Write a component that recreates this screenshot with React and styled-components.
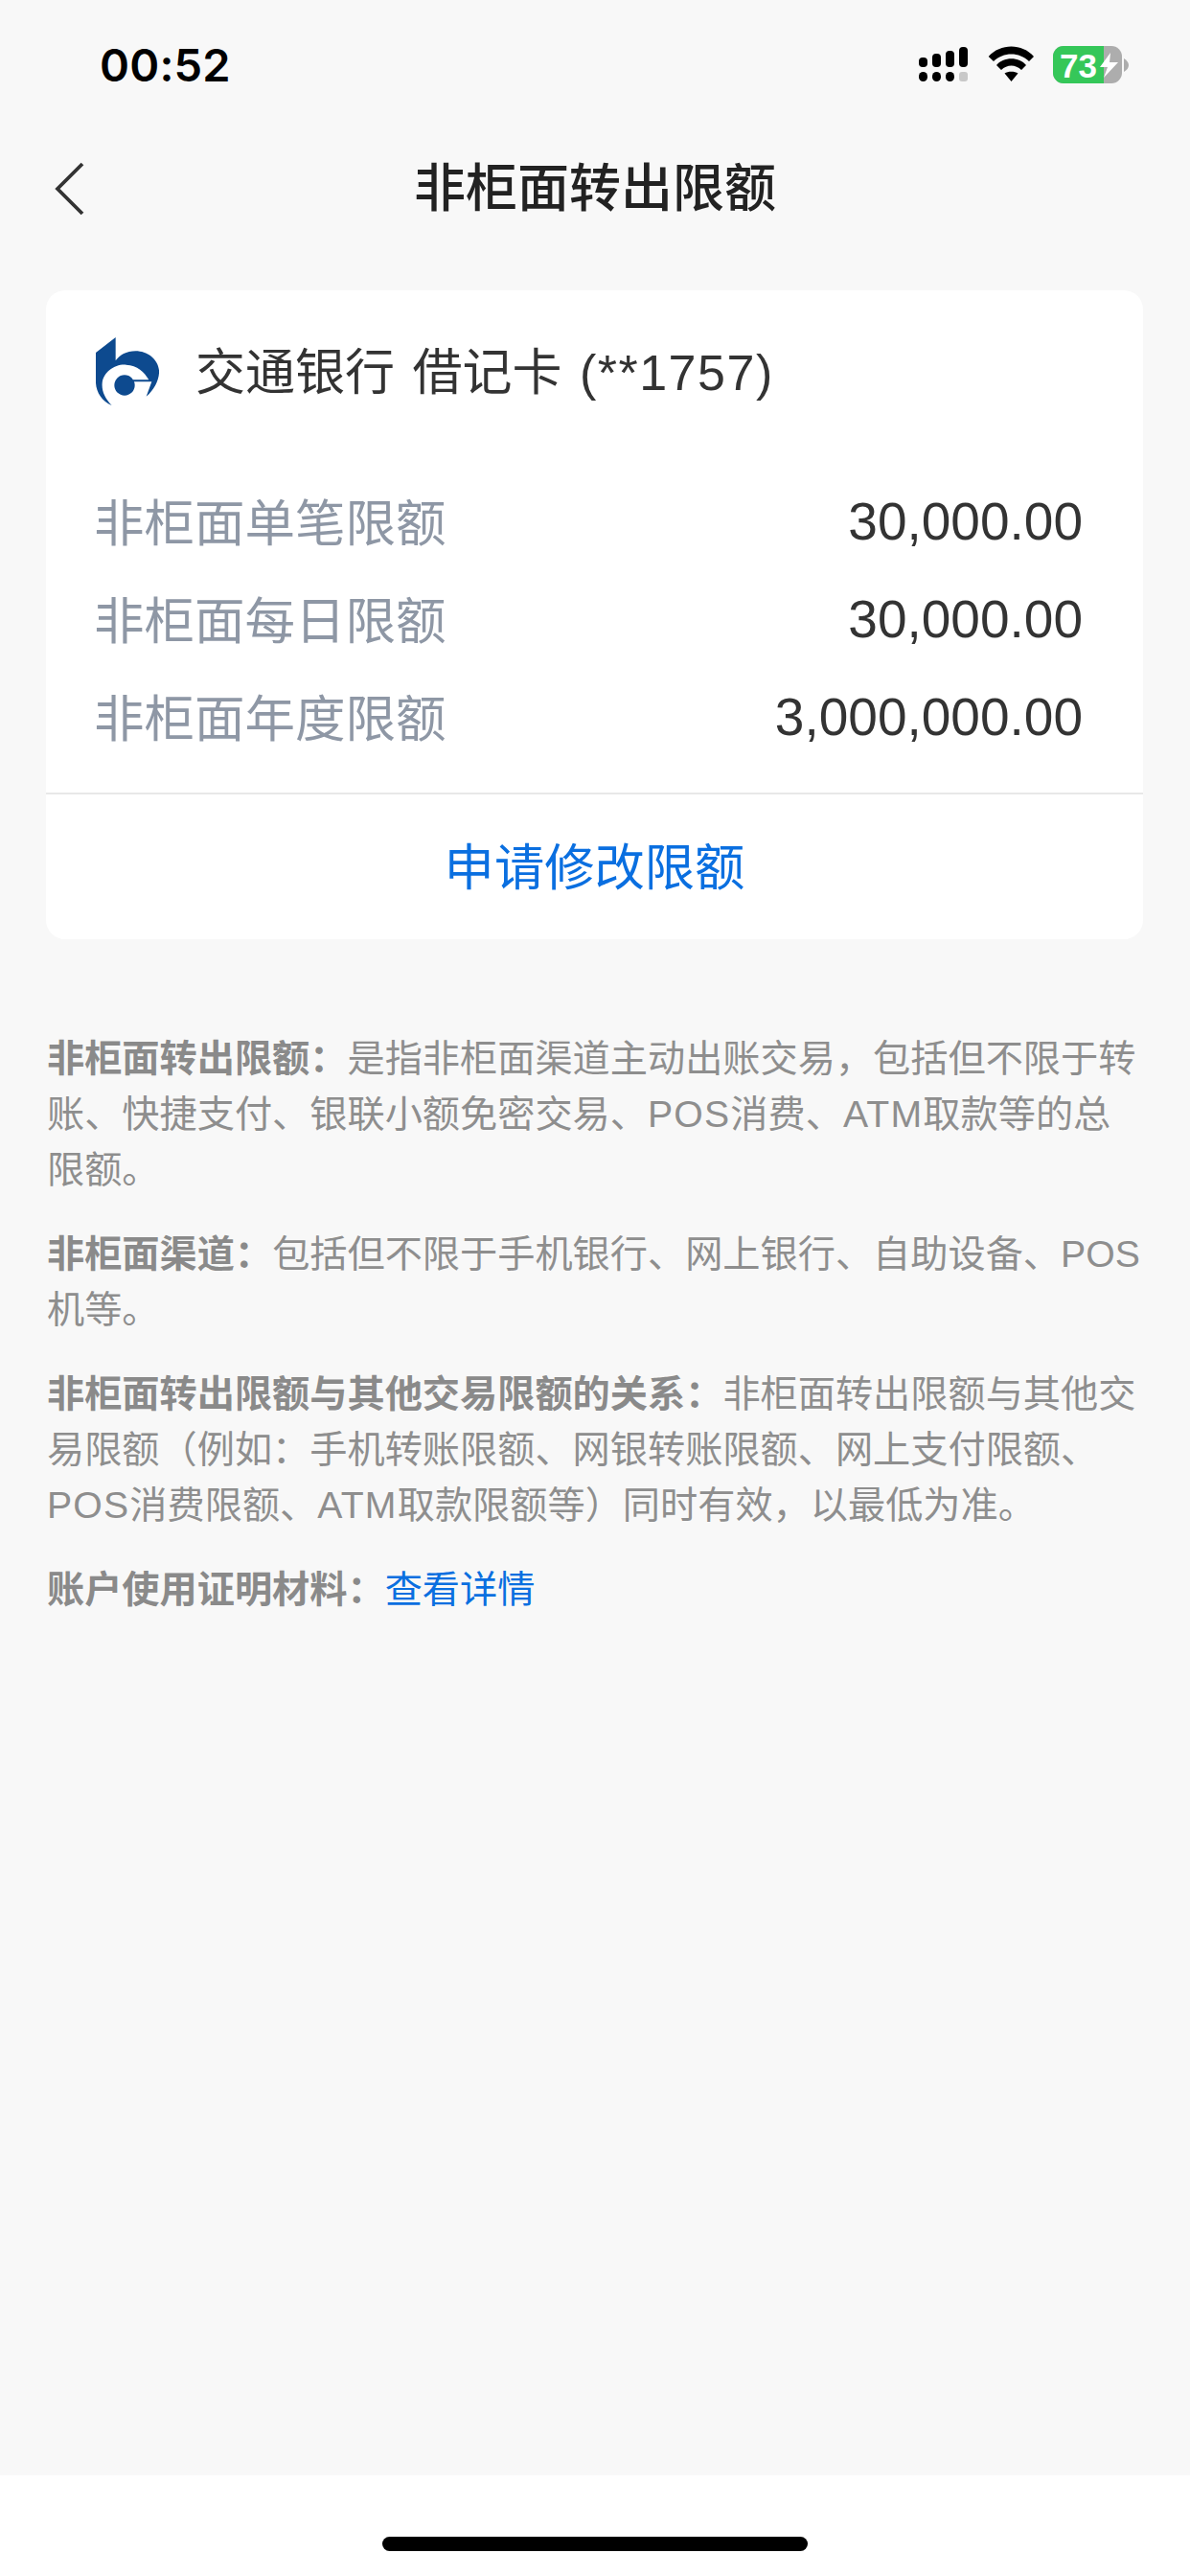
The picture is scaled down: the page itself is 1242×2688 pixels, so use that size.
import React from "react";
import styled, { createGlobalStyle } from "styled-components";

const Global = createGlobalStyle`
  html, body { margin: 0; padding: 0; background: #f8f8f8; }
  * { box-sizing: border-box; }
  body { font-family: "Liberation Sans", "Noto Sans CJK SC", sans-serif; }
`;
const Page = styled.div`
  width: 1242px; height: 2688px; display: flex; flex-direction: column; background: #f8f8f8;
`;
const StatusBar = styled.div`
  height: 132px; padding: 45px 64px 0 104px; display: flex; justify-content: space-between; align-items: flex-start;
`;
const Time = styled.div`
  font-family: Inter, "Liberation Sans", sans-serif; font-weight: 600; font-size: 47px; line-height: 46px; color: #000; letter-spacing: 0.2px;
`;
const StatusIcons = styled.svg`display: block; margin-top: 3px;`;
const BatteryText = styled.text`
  font-family: "Liberation Sans", sans-serif; font-weight: 700; font-size: 35px; fill: #fff;
`;
const NavBar = styled.div`
  height: 130px; position: relative; display: flex; align-items: center; justify-content: center; padding-bottom: 8px;
`;
const BackIcon = styled.svg`position: absolute; left: 57px; top: 37px;`;
const Title = styled.div`
  font-size: 54px; line-height: 64px; font-weight: 500; color: #222; font-family: "Noto Sans CJK SC", sans-serif;
`;
const Card = styled.div`
  margin: 41px 49px 0 48px; background: #fff; border-radius: 20px; display: flex; flex-direction: column;
`;
const CardHead = styled.div`
  height: 102px; margin-top: 33px; padding: 0 48px 0 52px; display: flex; align-items: center; gap: 38px;
`;
const BankName = styled.div`
  font-size: 52px; color: #333; line-height: 60px; white-space: pre; word-spacing: 4px; padding-top: 4px;
`;
const CardNo = styled.span`letter-spacing: 1.5px;`;
const Rows = styled.div`
  margin-top: 53px; padding: 0 63px 0 50px; display: flex; flex-direction: column;
`;
const Row = styled.div`
  height: 102px; display: flex; justify-content: space-between; align-items: center;
`;
const RowLabel = styled.div`
  font-size: 52.5px; color: #8e97a5; font-family: "Noto Sans CJK SC", sans-serif; line-height: 60px;
`;
const RowValue = styled.div`
  font-size: 55px; color: #333; font-family: "Liberation Sans", sans-serif; line-height: 60px; padding-top: 4px;
`;
const Action = styled.div`
  margin-top: 30px; height: 153px; padding-bottom: 7px; border-top: 2px solid #e8e8e8; display: flex; align-items: center; justify-content: center;
  color: #0a6fe0; font-size: 52.3px; font-family: "Noto Sans CJK SC", sans-serif;
`;
const Notes = styled.div`
  margin-top: 96px; padding: 0 48px 0 49px; display: flex; flex-direction: column; gap: 30px;
  font-family: "Liberation Sans", "Noto Sans CJK SC", sans-serif; font-size: 39.2px; line-height: 58px; color: #8e8e8e;
`;
const Note = styled.p`margin: 0;`;
const Strong = styled.b`font-weight: 700; color: #8a8a8a;`;
const Latin = styled.span`letter-spacing: 1.2px;`;
const Link = styled.span`color: #0a6fe0;`;
const Spacer = styled.div`flex: 1;`;
const Footer = styled.div`
  height: 105px; background: #fff; display: flex; justify-content: center; padding-top: 64px;
`;
const HomeBar = styled.div`
  width: 444px; height: 15px; border-radius: 8px; background: #000;
`;

const BankLogo = () => (
  <svg width="66" height="71" viewBox="30 22 198 213">
    <path fill="#0d4a8f" d="M92 22 L30 70 L30 165 C32 195 50 222 80 235 C58 212 48 190 50 165 C54 130 90 105 125 108 C160 110 182 130 196 155 L146 155 L146 161 L205 161 L188 207 C215 185 230 150 228 125 C225 90 190 65 155 65 C125 65 105 78 92 95 Z" />
    <circle cx="120" cy="172" r="32" fill="#0d4a8f" />
  </svg>
);

export default function App() {
  return (
    <Page>
      <Global />
      <StatusBar>
        <Time>00:52</Time>
        <StatusIcons width="219" height="40" viewBox="0 0 219 40">
          <g fill="#000">
            <rect x="0" y="12" width="9" height="10" rx="4" />
            <rect x="14" y="8" width="9" height="14" rx="4" />
            <rect x="28" y="5" width="9" height="17" rx="4" />
            <rect x="42" y="1" width="9" height="21" rx="4" />
            <rect x="0" y="27" width="9" height="10" rx="4.5" />
            <rect x="14" y="27" width="9" height="10" rx="4.5" />
            <rect x="28" y="27" width="9" height="10" rx="4.5" />
            <rect x="42" y="27" width="9" height="10" rx="3" fill="#c8c8c8" />
            <path d="M72.7 11 C85 -3 108 -3 120 11 L115 16 C105 6 88 6 78 16 Z" />
            <path d="M81 20 C88 11 105 11 112 20 L107 25 C101 19 92 19 86 25 Z" />
            <path d="M89.5 28.5 C93 26 100 26 103.5 28.5 L96.5 37 Z" />
          </g>
          <rect x="140" y="0" width="72" height="39" rx="11" fill="#adadad" />
          <path d="M151 0 H193 V39 H151 A11 11 0 0 1 140 28 V11 A11 11 0 0 1 151 0 Z" fill="#35c759" />
          <path d="M214 13 C217 15 219 17 219 20 C219 23 217 25 214 27 Z" fill="#adadad" />
          <BatteryText x="147" y="32.5">73</BatteryText>
          <path d="M200 7 L189 22 H197 L193 33 L208 17 H199 Z" fill="#fff" />
        </StatusIcons>
      </StatusBar>
      <NavBar>
        <BackIcon width="32" height="56" viewBox="0 0 32 56">
          <path d="M29 2 L3 28 L29 54" fill="none" stroke="#333" strokeWidth="3.8" />
        </BackIcon>
        <Title>非柜面转出限额</Title>
      </NavBar>
      <Card>
        <CardHead>
          <BankLogo />
          <BankName>交通银行 借记卡 <CardNo>(**1757)</CardNo></BankName>
        </CardHead>
        <Rows>
          <Row><RowLabel>非柜面单笔限额</RowLabel><RowValue>30,000.00</RowValue></Row>
          <Row><RowLabel>非柜面每日限额</RowLabel><RowValue>30,000.00</RowValue></Row>
          <Row><RowLabel>非柜面年度限额</RowLabel><RowValue>3,000,000.00</RowValue></Row>
        </Rows>
        <Action>申请修改限额</Action>
      </Card>
      <Notes>
        <Note><Strong>非柜面转出限额：</Strong>是指非柜面渠道主动出账交易，包括但不限于转账、快捷支付、银联小额免密交易、<Latin>POS</Latin>消费、<Latin>ATM</Latin>取款等的总限额。</Note>
        <Note><Strong>非柜面渠道：</Strong>包括但不限于手机银行、网上银行、自助设备、POS机等。</Note>
        <Note><Strong>非柜面转出限额与其他交易限额的关系：</Strong>非柜面转出限额与其他交易限额（例如：手机转账限额、网银转账限额、网上支付限额、<Latin>POS</Latin>消费限额、<Latin>ATM</Latin>取款限额等）同时有效，以最低为准。</Note>
        <Note><Strong>账户使用证明材料：</Strong><Link>查看详情</Link></Note>
      </Notes>
      <Spacer />
      <Footer><HomeBar /></Footer>
    </Page>
  );
}
